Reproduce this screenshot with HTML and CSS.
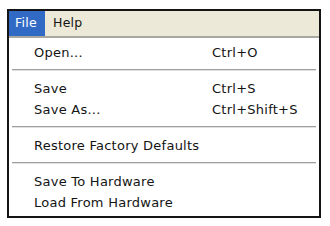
FILE: index.html
```html
<!DOCTYPE html>
<html>
<head>
<meta charset="utf-8">
<link rel="stylesheet" href="styles.css">
</head>
<body>
<div class="frame">
  <div class="menubar">
    <span class="top active">File</span>
    <span class="top">Help</span>
  </div>
  <div class="menu">
    <div class="item"><span class="label">Open...</span><span class="key">Ctrl+O</span></div>
    <div class="sep"></div>
    <div class="item"><span class="label">Save</span><span class="key">Ctrl+S</span></div>
    <div class="item"><span class="label">Save As...</span><span class="key">Ctrl+Shift+S</span></div>
    <div class="sep"></div>
    <div class="item"><span class="label">Restore Factory Defaults</span><span class="key"></span></div>
    <div class="sep"></div>
    <div class="item"><span class="label">Save To Hardware</span><span class="key"></span></div>
    <div class="item"><span class="label">Load From Hardware</span><span class="key"></span></div>
  </div>
</div>
</body>
</html>
```
FILE: styles.css
```css
html, body {
  margin: 0;
  padding: 0;
  background: #ffffff;
}
body {
  font-family: "DejaVu Sans", Verdana, sans-serif;
  font-size: 13px;
  letter-spacing: 0.25px;
  color: #141414;
}
.frame {
  margin: 9px 0 0 7px;
  width: 310px;
  height: 205px;
  border: 2px solid #141414;
  display: flex;
  flex-direction: column;
  background: #ffffff;
}
.menubar {
  height: 25px;
  background: #ece9d8;
  border-bottom: 2px solid #a8a8a0;
  display: flex;
  align-items: stretch;
  font-size: 12.5px;
}
.top {
  display: flex;
  align-items: center;
  padding: 0 0 2px 0;
  line-height: 20px;
}
.top.active {
  background: #316ac5;
  color: #ffffff;
  width: 30px;
  padding-left: 6px;
}
.top + .top {
  margin-left: 8px;
}
.menu {
  padding: 4px 0 3px 0;
  display: flex;
  flex-direction: column;
}
.item {
  display: grid;
  grid-template-columns: 178px auto;
  height: 21px;
  line-height: 21px;
  padding-left: 25px;
  white-space: nowrap;
}
.sep {
  margin: 6px 3px 7px 3px;
  height: 0;
  border-top: 1px solid #a0a0a0;
  border-bottom: 1px solid #e0e0e0;
}
```
